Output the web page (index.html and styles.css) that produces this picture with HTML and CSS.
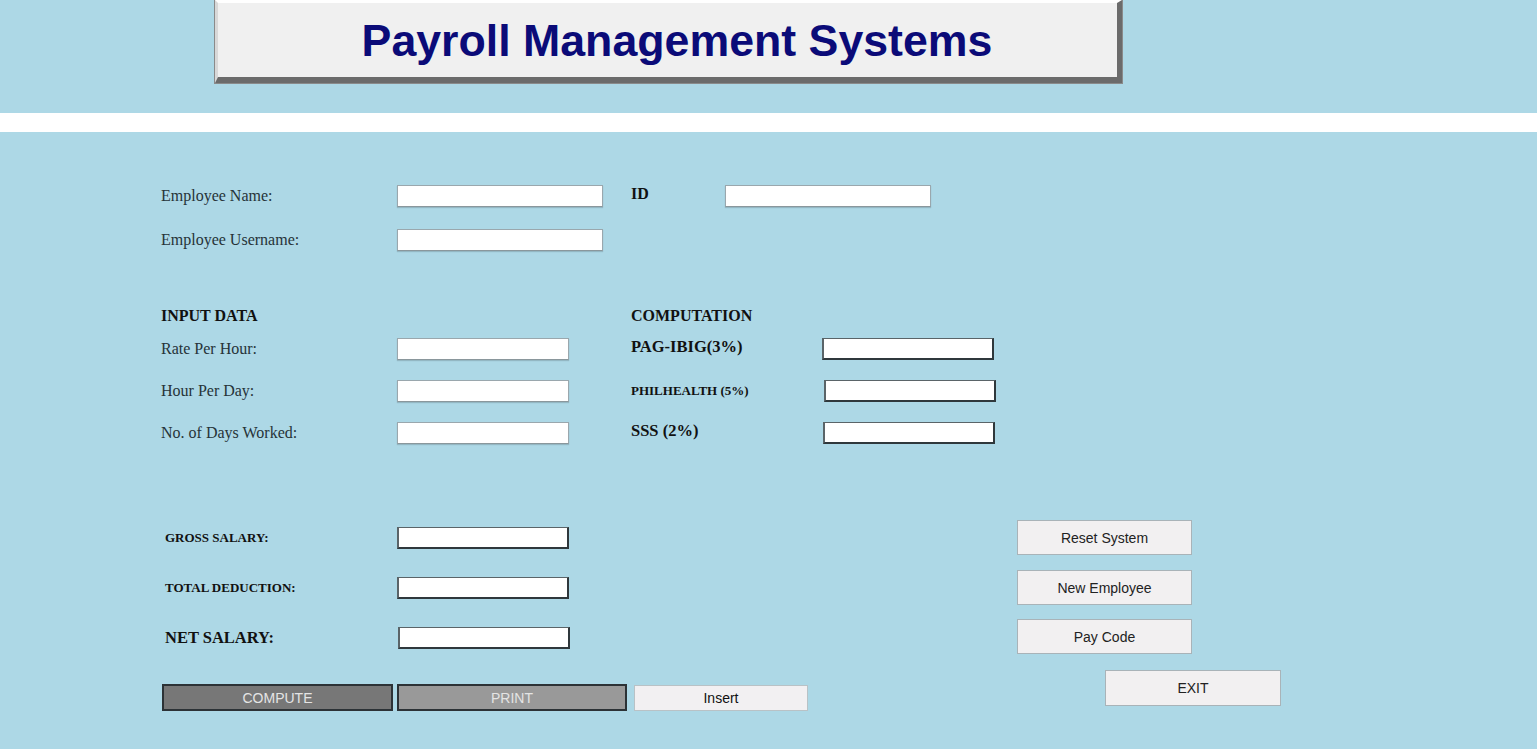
FILE: index.html
```html
<!DOCTYPE html>
<html>
<head>
<meta charset="utf-8">
<title>Payroll Management Systems</title>
<link rel="stylesheet" href="styles.css">
</head>
<body>
<header class="top">
  <div class="title-box"><h1 class="title">Payroll Management Systems</h1></div>
</header>
<div class="band"></div>
<main class="main">
  <section class="emp">
    <div class="row r-emp">
      <label class="lbl w-left">Employee Name:</label>
      <input class="inp inp-wide" type="text">
      <label class="lbl lbl-bold w-id">ID</label>
      <input class="inp inp-wide" type="text">
    </div>
    <div class="row r-emp">
      <label class="lbl w-left">Employee Username:</label>
      <input class="inp inp-wide" type="text">
    </div>
  </section>

  <section class="data">
    <div class="row r-head">
      <div class="lbl lbl-bold w-left2">INPUT DATA</div>
      <div class="lbl lbl-bold">COMPUTATION</div>
    </div>
    <div class="row r-data">
      <label class="lbl w-left">Rate Per Hour:</label>
      <input class="inp inp-mid" type="text">
      <label class="lbl lbl-bold lbl-lg w-comp">PAG-IBIG(3%)</label>
      <input class="inp inp-mid inp-dark" type="text">
    </div>
    <div class="row r-data">
      <label class="lbl w-left">Hour Per Day:</label>
      <input class="inp inp-mid" type="text">
      <label class="lbl lbl-bold lbl-small w-comp2">PHILHEALTH (5%)</label>
      <input class="inp inp-mid inp-dark" type="text">
    </div>
    <div class="row r-data">
      <label class="lbl w-left">No. of Days Worked:</label>
      <input class="inp inp-mid" type="text">
      <label class="lbl lbl-bold lbl-lg w-comp3">SSS (2%)</label>
      <input class="inp inp-mid inp-dark" type="text">
    </div>
  </section>

  <section class="bottom">
    <div class="left-col">
      <div class="row r-sal first">
        <label class="lbl lbl-bold lbl-xs w-sal">GROSS SALARY:</label>
        <input class="inp inp-mid inp-dark" type="text">
      </div>
      <div class="row r-sal">
        <label class="lbl lbl-bold lbl-xs w-sal">TOTAL DEDUCTION:</label>
        <input class="inp inp-mid inp-dark" type="text">
      </div>
      <div class="row r-sal">
        <label class="lbl lbl-bold w-sal net">NET SALARY:</label>
        <input class="inp inp-mid inp-dark" type="text">
      </div>
      <div class="actions">
        <button class="btn btn-compute">COMPUTE</button>
        <button class="btn btn-print">PRINT</button>
        <button class="btn btn-insert">Insert</button>
      </div>
    </div>
    <div class="right-col">
      <button class="btn btn-side">Reset System</button>
      <button class="btn btn-side">New Employee</button>
      <button class="btn btn-side">Pay Code</button>
      <button class="btn btn-side btn-exit">EXIT</button>
    </div>
  </section>
</main>
</body>
</html>
```

FILE: styles.css
```css
* { box-sizing: border-box; }
html, body { margin: 0; padding: 0; }
body {
  background: #add8e6;
  width: 1537px;
  height: 749px;
  overflow: hidden;
  font-family: "Liberation Serif", "Times New Roman", serif;
  color: #2a3a40;
}
.top {
  height: 113px;
  padding-left: 215px;
}
.title-box {
  width: 907px;
  height: 83px;
  background: #f0f0f0;
  border-style: solid;
  border-width: 3px 5px 6px 3px;
  border-color: #ffffff #6b6b6b #6b6b6b #d8d8d8;
  display: flex;
  align-items: center;
  justify-content: center;
  box-shadow: 0 0 0 1px #8a8a8a;
}
.title {
  margin: 2px 0 0 19px;
  font-family: "Liberation Sans", Arial, sans-serif;
  font-weight: bold;
  font-size: 44.7px;
  color: #0b0b78;
}
.band {
  height: 19px;
  background: #ffffff;
}
.main {
  padding: 53px 0 0 161px;
}
.row {
  display: flex;
  align-items: center;
}
.lbl {
  font-size: 16px;
  line-height: 18px;
  color: #263338;
}
.lbl-bold { font-weight: bold; color: #111; }
.lbl-lg { font-size: 16.5px; }
.lbl-small { font-size: 13px; }
.lbl-xs { font-size: 13px; }
.net { font-size: 16.5px; }
.w-left { width: 236px; }
.w-left2 { width: 470px; }
.w-id { width: 94px; margin-left: 28px; position: relative; top: -2px; }
.w-comp { width: 191px; margin-left: 62px; position: relative; top: -2px; }
.w-comp2 { width: 193px; margin-left: 62px; }
.w-comp3 { width: 192px; margin-left: 62px; position: relative; top: -2px; }
.inp {
  height: 22px;
  background: #ffffff;
  border: 1px solid #9aa7ad;
  border-bottom-color: #8a979c;
  box-shadow: 0 1px 1px rgba(0,0,0,0.15);
  margin: 0;
  padding: 0;
}
.inp-wide { width: 206px; }
.inp-mid { width: 172px; }
.inp-dark {
  border: 2px solid #404a4e;
  border-top-width: 1px;
  border-left-width: 2px;
  border-color: #5a6468 #2f383c #2f383c #5a6468;
  box-shadow: none;
}
.r-emp { height: 22px; margin-bottom: 22px; }
.emp { height: 121px; }
.r-head { height: 20px; margin-bottom: 12px; }
.r-data { height: 22px; margin-bottom: 20px; }
.data { height: 214px; }
.bottom {
  display: flex;
}
.left-col { width: 856px; padding-top: 7px; }
.r-sal { height: 22px; margin-bottom: 28px; }
.w-sal { width: 232px; margin-left: 4px; }
.r-sal:nth-child(3) .inp { margin-left: 1px; }
.r-sal:nth-child(3) { margin-bottom: 35px; }
.actions { display: flex; }
.btn {
  font-family: "Liberation Sans", Arial, sans-serif;
  font-size: 14px;
  margin: 0;
  padding: 0;
  cursor: pointer;
}
.btn-compute, .btn-print {
  height: 27px;
  width: 231px;
  border: 2px solid #2c3236;
  color: #e4e4e4;
}
.btn-compute { margin-left: 1px; background: #777777; }
.btn-print { margin-left: 4px; width: 230px; background: #999999; }
.btn-insert {
  margin-left: 7px;
  width: 174px;
  height: 26px;
  background: #f2f0f2;
  border: 1px solid #b9c2c6;
  color: #111;
  margin-top: 1px;
}
.right-col {
  display: flex;
  flex-direction: column;
  align-items: flex-start;
}
.btn-side {
  width: 175px;
  height: 35px;
  background: #f2f0f1;
  border: 1px solid #a9b3b8;
  color: #222;
  margin-bottom: 15px;
}
.btn-side:nth-child(2) { margin-bottom: 14px; }
.btn-exit { width: 176px; height: 36px; margin-left: 88px; margin-top: 1px; }
```
